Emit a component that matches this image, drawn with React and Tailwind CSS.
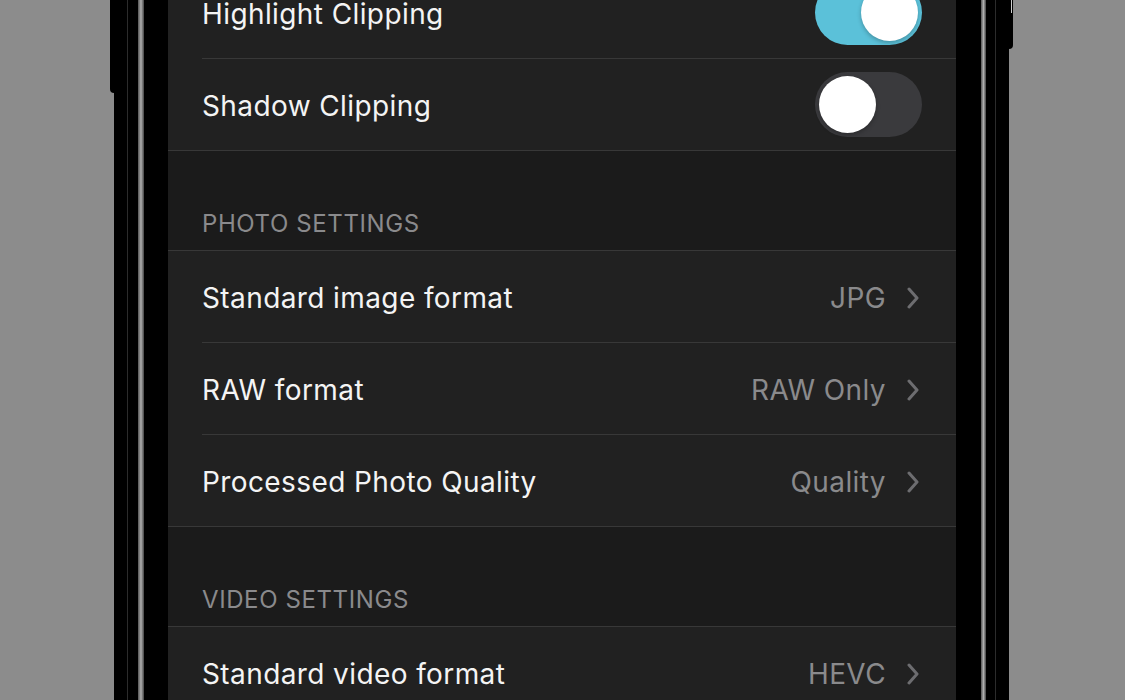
import React from "react";

const font = { fontFamily: "Inter, 'Noto Sans', sans-serif" };

function Toggle({ on }) {
  return (
    <div
      className={`flex h-[65px] w-[107px] items-center rounded-full p-[4px] ${
        on ? "justify-end bg-[#5bc1d9]" : "justify-start bg-[#3a3a3d]"
      }`}
    >
      <div className="h-[57px] w-[57px] rounded-full bg-white shadow-[0_2px_4px_rgba(0,0,0,0.25)]" />
    </div>
  );
}

function Chevron() {
  return (
    <svg width="14" height="22" viewBox="0 0 14 22" className="ml-[20px]">
      <polyline
        points="3,2 11,11 3,20"
        fill="none"
        stroke="#6d6d70"
        strokeWidth="3"
        strokeLinecap="round"
        strokeLinejoin="round"
      />
    </svg>
  );
}

function Row({ label, value, toggle, last }) {
  return (
    <div className={`flex h-[92px] bg-[#212121] ${last ? "border-b border-[#383838]" : ""}`}>
      <div
        className={`ml-[34px] flex flex-1 items-center justify-between ${
          last ? "" : "border-b border-[#383838]"
        } ${toggle === undefined ? "pr-[36px]" : "pr-[34px]"}`}
      >
        <span className="mt-[3px] text-[28px] tracking-[0.4px] text-[#f4f4f4]">{label}</span>
        {toggle !== undefined ? (
          <Toggle on={toggle} />
        ) : (
          <div className="mt-[3px] flex items-center">
            <span className="text-[28px] tracking-[0.4px] text-[#8a8a8c]">{value}</span>
            <Chevron />
          </div>
        )}
      </div>
    </div>
  );
}

function Header({ title }) {
  return (
    <div className="flex h-[100px] items-end border-b border-[#383838] bg-[#1b1b1b] pb-[11px] pl-[34px]">
      <span className="text-[24px] leading-[30px] tracking-[0.6px] text-[#8a8a8c]">{title}</span>
    </div>
  );
}

export default function App() {
  return (
    <div className="h-[700px] w-full overflow-hidden bg-[#8c8c8c]" style={font}>
      <div className="relative ml-[114px] flex h-[700px] w-[895px] bg-black">
        {/* side buttons */}
        <div className="absolute -left-[4px] top-0 h-[93px] w-[4px] rounded-bl-sm bg-black" />
        <div className="absolute -right-[4px] top-0 h-[49px] w-[4px] rounded-br-sm bg-black">
          <div className="ml-[2px] h-[13px] w-[1px] bg-[#d0d0d0]" />
        </div>

        {/* left bezel */}
        <div className="w-[13px]" />
        <div className="w-[1px] bg-[#2c2c2c]" />
        <div className="w-[10px]" />
        <div className="w-[6px] bg-gradient-to-r from-[#555] via-[#b0b0b0] to-[#444]" />
        <div className="w-[24px]" />

        {/* screen */}
        <div className="w-[788px] overflow-hidden bg-[#212121]">
          <div className="-mt-[33px]">
            <Row label="Highlight Clipping" toggle={true} />
            <Row label="Shadow Clipping" toggle={false} last />
            <Header title="PHOTO SETTINGS" />
            <Row label="Standard image format" value="JPG" />
            <Row label="RAW format" value="RAW Only" />
            <Row label="Processed Photo Quality" value="Quality" last />
            <Header title="VIDEO SETTINGS" />
            <Row label="Standard video format" value="HEVC" />
          </div>
        </div>

        {/* right bezel */}
        <div className="w-[25px]" />
        <div className="w-[5px] bg-gradient-to-r from-[#555] via-[#b0b0b0] to-[#444]" />
        <div className="w-[9px]" />
        <div className="w-[1px] bg-[#2c2c2c]" />
        <div className="w-[13px]" />
      </div>
    </div>
  );
}
